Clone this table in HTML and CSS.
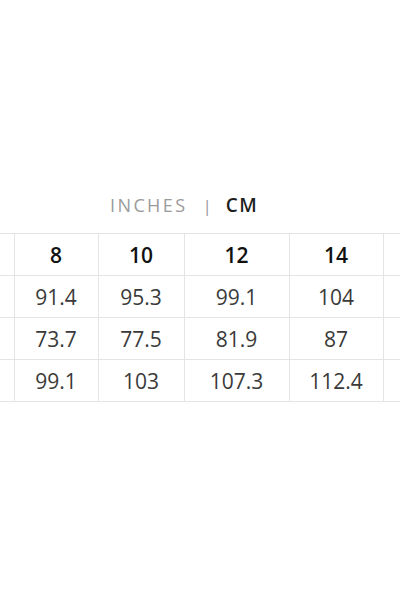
FILE: index.html
```html
<!DOCTYPE html>
<html>
<head>
<meta charset="utf-8">
<link rel="stylesheet" href="styles.css">
</head>
<body>
<div class="page">
  <div class="units">
    <span class="unit unit-off">INCHES</span>
    <span class="sep">|</span>
    <span class="unit unit-on">CM</span>
  </div>
  <table class="sizes">
    <colgroup>
      <col class="c-edge-l">
      <col class="c1">
      <col class="c2">
      <col class="c3">
      <col class="c4">
      <col class="c-edge-r">
    </colgroup>
    <thead>
      <tr><th></th><th>8</th><th>10</th><th>12</th><th>14</th><th></th></tr>
    </thead>
    <tbody>
      <tr><td></td><td>91.4</td><td>95.3</td><td>99.1</td><td>104</td><td></td></tr>
      <tr><td></td><td>73.7</td><td>77.5</td><td>81.9</td><td>87</td><td></td></tr>
      <tr><td></td><td>99.1</td><td>103</td><td>107.3</td><td>112.4</td><td></td></tr>
    </tbody>
  </table>
</div>
</body>
</html>
```
FILE: styles.css
```css
html, body {
  margin: 0;
  padding: 0;
  background: #ffffff;
}
body {
  font-family: "Open Sans", "Noto Sans", sans-serif;
  color: #333;
}
.page {
  padding-top: 192px;
}
.units {
  display: flex;
  align-items: center;
  padding-left: 110px;
  height: 26px;
  margin-bottom: 15px;
}
.unit {
  font-size: 18px;
  line-height: 26px;
}
.unit-off {
  color: #9a9a9a;
  letter-spacing: 2.4px;
}
.unit-on {
  color: #1e1e1e;
  font-weight: 600;
  font-size: 19px;
  letter-spacing: 1.5px;
}
.sep {
  color: #9a9a9a;
  font-size: 17px;
  margin: 0 14px 0 15px;
}
.sizes {
  width: 400px;
  table-layout: fixed;
  border-collapse: collapse;
}
.c-edge-l { width: 14px; }
.c1 { width: 84px; }
.c2 { width: 86px; }
.c3 { width: 105px; }
.c4 { width: 94px; }
.c-edge-r { width: 17px; }
.sizes th,
.sizes td {
  height: 41px;
  padding: 0;
  border: 1px solid #e4e4e4;
  text-align: center;
  vertical-align: middle;
  font-size: 21px;
  line-height: 24px;
}
.sizes tr > :first-child { border-left: none; }
.sizes tr > :last-child { border-right: none; }
.sizes th {
  color: #111;
  font-weight: 600;
}
.sizes td {
  color: #3a3a3a;
  font-weight: 400;
}
```
